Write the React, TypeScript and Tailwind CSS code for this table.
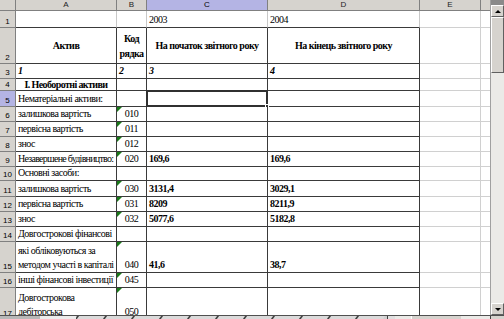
import React from 'react';

type Row = {
  n: number;
  h: string;
  a?: React.ReactNode;
  b?: string;
  c?: string;
  d?: string;
  tri?: boolean;
};

const rows: Row[] = [
  { n: 1, h: 'h-[17px]' },
  { n: 2, h: 'h-[36px]' },
  { n: 3, h: 'h-[15px]' },
  { n: 4, h: 'h-[12px]' },
  { n: 5, h: 'h-[16px]', a: 'Нематеріальні активи:' },
  { n: 6, h: 'h-[15px]', a: 'залишкова вартість', b: '010', tri: true },
  { n: 7, h: 'h-[15px]', a: 'первісна вартість', b: '011', tri: true },
  { n: 8, h: 'h-[15px]', a: 'знос', b: '012', tri: true },
  {
    n: 9,
    h: 'h-[15px]',
    a: <span className="tracking-[-0.75px]">Незавершене будівництво:</span>,
    b: '020',
    c: '169,6',
    d: '169,6',
    tri: true,
  },
  { n: 10, h: 'h-[14px]', a: 'Основні засоби:' },
  { n: 11, h: 'h-[16px]', a: 'залишкова вартість', b: '030', c: '3131,4', d: '3029,1', tri: true },
  { n: 12, h: 'h-[15px]', a: 'первісна вартість', b: '031', c: '8209', d: '8211,9', tri: true },
  { n: 13, h: 'h-[15px]', a: 'знос', b: '032', c: '5077,6', d: '5182,8', tri: true },
  { n: 14, h: 'h-[15px]', a: 'Довгострокові фінансові' },
  {
    n: 15,
    h: 'h-[31px]',
    a: (
      <>
        які обліковуються за
        <br />
        методом участі в капіталі
      </>
    ),
    b: '040',
    c: '41,6',
    d: '38,7',
    tri: true,
  },
  { n: 16, h: 'h-[15px]', a: 'інші фінансові інвестиції', b: '045', tri: true },
  {
    n: 17,
    h: 'h-[32px]',
    a: (
      <>
        Довгострокова
        <br />
        дебіторська
      </>
    ),
    b: '050',
    tri: true,
  },
];

const serif = "font-['Liberation_Serif','Times_New_Roman',serif] text-[10px] tracking-[-0.5px]";
const sans = "font-['Liberation_Sans',Arial,sans-serif]";

function ColHead({ label, w, active }: { label: string; w: string; active?: boolean }) {
  return (
    <div
      className={`${w} h-full flex items-center justify-center border-r border-b border-[#808080] text-[8px] ${sans} ${
        active ? 'bg-[#b4b4e4] text-black' : 'bg-[#d6d3ce] text-[#222]'
      }`}
    >
      {label}
    </div>
  );
}

function Triangle() {
  return (
    <span className="absolute top-0 left-0 w-0 h-0 border-t-[5px] border-r-[5px] border-t-[#1a7a1a] border-r-transparent" />
  );
}

export default function App() {
  return (
    <div className="w-[504px] h-[319px] overflow-hidden bg-white flex flex-col">
      <div className="flex h-[315px] overflow-hidden">
        {/* Sheet */}
        <div className="w-[490px] flex flex-col">
          {/* Column headers */}
          <div className="flex h-[11px] shrink-0">
            <div className="w-[16px] h-full bg-[#d6d3ce] border-r border-b border-[#808080]" />
            <ColHead label="A" w="w-[101px]" />
            <ColHead label="B" w="w-[30px]" />
            <ColHead label="C" w="w-[121px]" active />
            <ColHead label="D" w="w-[152px]" />
            <ColHead label="E" w="w-[61px]" />
            <div className="w-[9px] h-full bg-[#d6d3ce] border-b border-[#808080]" />
          </div>

          {rows.map((r) => {
            const table = r.n >= 2;
            const rowLine = 'border-b-[#3a3a3a]';
            const vLine = table ? 'border-r-[#3a3a3a]' : 'border-r-[#c8c8c8]';
            return (
              <div key={r.n} className={`flex shrink-0 ${r.h}`}>
                <div
                  className={`w-[16px] h-full flex items-end justify-center pb-[1px] border-r border-b border-[#808080] text-[8px] leading-none ${sans} ${
                    r.n === 5 ? 'bg-[#b4b4e4]' : 'bg-[#d6d3ce]'
                  }`}
                >
                  {r.n}
                </div>

                {/* A */}
                <div
                  className={`w-[101px] h-full border-r border-b ${vLine} ${rowLine} ${serif} leading-[14px] text-black overflow-hidden flex px-[2px] ${
                    r.n === 2 || r.n === 4 ? 'items-center justify-center font-bold' : 'items-end'
                  } ${r.n === 3 ? 'font-bold italic' : ''}`}
                >
                  {r.n === 2 ? (
                    'Актив'
                  ) : r.n === 3 ? (
                    '1'
                  ) : r.n === 4 ? (
                    <span className="leading-[11px] tracking-[-0.6px] whitespace-nowrap">I. Необоротні активи</span>
                  ) : (
                    <span className="whitespace-nowrap">{r.a}</span>
                  )}
                </div>

                {/* B */}
                <div
                  className={`relative w-[30px] h-full border-r border-b ${vLine} ${rowLine} ${serif} leading-[14px] text-black flex ${
                    r.n === 2
                      ? 'items-center justify-center font-bold text-center leading-[15px]'
                      : r.n === 3
                        ? 'items-end px-[2px] font-bold italic'
                        : 'items-end justify-center'
                  }`}
                >
                  {r.tri && <Triangle />}
                  {r.n === 2 ? (
                    <span>
                      Код
                      <br />
                      рядка
                    </span>
                  ) : r.n === 3 ? (
                    '2'
                  ) : (
                    r.b
                  )}
                </div>

                {/* C */}
                <div
                  className={`relative w-[121px] h-full border-r border-b ${r.n === 1 ? 'border-r-[#c8c8c8]' : vLine} ${rowLine} ${serif} leading-[14px] text-black flex px-[2px] whitespace-nowrap ${
                    r.n === 2 ? 'items-center justify-center font-bold' : 'items-end'
                  } ${r.n === 3 ? 'font-bold italic' : ''} ${r.c ? 'font-bold' : ''}`}
                >
                  {r.n === 1 ? '2003' : r.n === 2 ? 'На початок звітного року' : r.n === 3 ? '3' : r.c}
                  {r.n === 5 && (
                    <span className="absolute -left-px -top-px -right-px -bottom-px border-2 border-[#303030]">
                      <span className="absolute -right-[3px] -bottom-[3px] w-[4px] h-[4px] bg-[#303030] border border-white" />
                    </span>
                  )}
                </div>

                {/* D */}
                <div
                  className={`w-[152px] h-full border-r border-b ${r.n === 1 ? 'border-r-[#c8c8c8]' : vLine} ${rowLine} ${serif} leading-[14px] text-black flex px-[2px] whitespace-nowrap ${
                    r.n === 2 ? 'items-center justify-center font-bold' : 'items-end'
                  } ${r.n === 3 ? 'font-bold italic' : ''} ${r.d ? 'font-bold' : ''}`}
                >
                  {r.n === 1 ? '2004' : r.n === 2 ? 'На кінець звітного року' : r.n === 3 ? '4' : r.d}
                </div>

                {/* E */}
                <div className="w-[61px] h-full border-r border-b border-[#d0d0d0]" />
                <div className="w-[9px] h-full border-b border-[#d0d0d0]" />
              </div>
            );
          })}
        </div>

        {/* Vertical scrollbar */}
        <div className="w-[14px] h-full flex flex-col bg-[#ebeae7] border-l border-[#a0a0a0]">
          <div className="h-[5px] bg-[#8a8a8a]" />
          <div className="h-[12px] bg-[#d6d3ce] border border-t-white border-l-white border-r-[#606060] border-b-[#606060] flex items-center justify-center">
            <span className="w-0 h-0 border-l-[3px] border-r-[3px] border-b-[3px] border-l-transparent border-r-transparent border-b-black" />
          </div>
          <div className="h-[56px] bg-[#d6d3ce] border border-t-white border-l-white border-r-[#606060] border-b-[#606060]" />
          <div className="flex-1" />
          <div className="h-[12px] bg-[#d6d3ce] border border-t-white border-l-white border-r-[#606060] border-b-[#606060] flex items-center justify-center">
            <span className="w-0 h-0 border-l-[3px] border-r-[3px] border-t-[3px] border-l-transparent border-r-transparent border-t-black" />
          </div>
        </div>
      </div>

      {/* Sheet tabs / horizontal scrollbar strip (cut off) */}
      <div className="h-[4px] flex bg-[#c8c8c8] border-t border-[#505050]">
        <div className="w-[40px] h-full bg-[#b8b8b8]" />
        <div className="w-[36px] h-full bg-[#ececec]" />
        <div className="w-[311px] h-full flex bg-[#d0d0d0] overflow-hidden">
          {[0, 1, 2, 3, 4, 5, 6, 7, 8, 9, 10].map((i) => (
            <div key={i} className="w-[28px] shrink-0 h-full border-l-2 border-[#404040] -skew-x-[35deg] bg-[#dadada]" />
          ))}
        </div>
        <div className="w-[8px] h-full border-l border-[#404040] bg-[#e0e0e0]" />
        <div className="flex-1 h-full bg-[#ebeae7] flex">
          <div className="w-[50px] ml-[16px] h-full bg-[#d6d3ce] border-l border-white" />
          <div className="flex-1" />
          <div className="w-[14px] h-full border-l border-[#404040] bg-[#d6d3ce]" />
        </div>
      </div>
    </div>
  );
}
